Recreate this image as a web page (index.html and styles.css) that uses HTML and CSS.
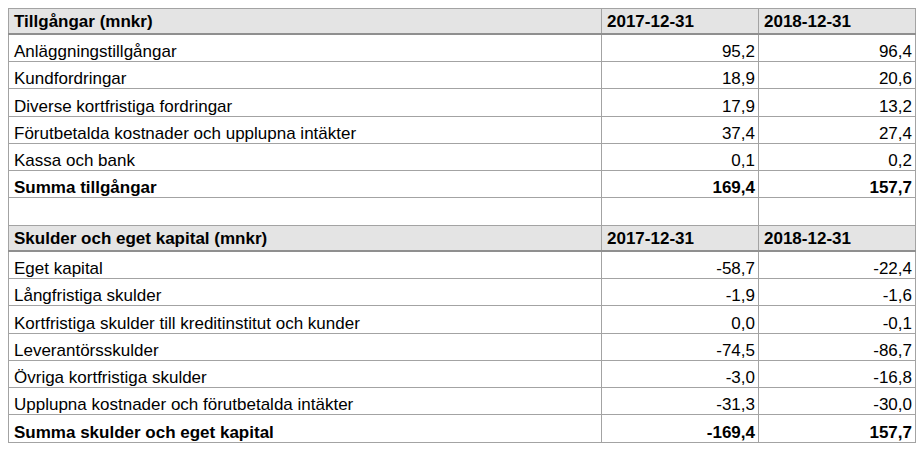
FILE: index.html
```html
<!DOCTYPE html>
<html lang="sv">
<head>
<meta charset="utf-8">
<link rel="stylesheet" href="styles.css">
</head>
<body>
<table class="bal">
  <colgroup><col class="c1"><col class="c2"><col class="c3"></colgroup>
  <tr class="head"><td>Tillgångar (mnkr)</td><td>2017-12-31</td><td>2018-12-31</td></tr>
  <tr><td>Anläggningstillgångar</td><td class="num">95,2</td><td class="num">96,4</td></tr>
  <tr><td>Kundfordringar</td><td class="num">18,9</td><td class="num">20,6</td></tr>
  <tr class="tall"><td>Diverse kortfristiga fordringar</td><td class="num">17,9</td><td class="num">13,2</td></tr>
  <tr><td>Förutbetalda kostnader och upplupna intäkter</td><td class="num">37,4</td><td class="num">27,4</td></tr>
  <tr><td>Kassa och bank</td><td class="num">0,1</td><td class="num">0,2</td></tr>
  <tr class="sum"><td>Summa tillgångar</td><td class="num">169,4</td><td class="num">157,7</td></tr>
  <tr class="blank tall"><td></td><td></td><td></td></tr>
  <tr class="head"><td>Skulder och eget kapital (mnkr)</td><td>2017-12-31</td><td>2018-12-31</td></tr>
  <tr><td>Eget kapital</td><td class="num">-58,7</td><td class="num">-22,4</td></tr>
  <tr><td>Långfristiga skulder</td><td class="num">-1,9</td><td class="num">-1,6</td></tr>
  <tr class="tall"><td>Kortfristiga skulder till kreditinstitut och kunder</td><td class="num">0,0</td><td class="num">-0,1</td></tr>
  <tr><td>Leverantörsskulder</td><td class="num">-74,5</td><td class="num">-86,7</td></tr>
  <tr><td>Övriga kortfristiga skulder</td><td class="num">-3,0</td><td class="num">-16,8</td></tr>
  <tr><td>Upplupna kostnader och förutbetalda intäkter</td><td class="num">-31,3</td><td class="num">-30,0</td></tr>
  <tr class="sum tall"><td>Summa skulder och eget kapital</td><td class="num">-169,4</td><td class="num">157,7</td></tr>
</table>
</body>
</html>
```
FILE: styles.css
```css
html, body {
  margin: 0;
  padding: 0;
  background: #ffffff;
}
body {
  padding: 8px;
  font-family: "Liberation Sans", Arial, sans-serif;
  font-size: 17px;
  color: #000;
}
.bal {
  border-collapse: collapse;
  table-layout: fixed;
  width: 907px;
  border: 1px solid #8a8a8a;
}
.c1 { width: 593px; }
.c2 { width: 157px; }
.c3 { width: 157px; }
.bal td {
  height: 26px;
  padding: 0 3px 0 5px;
  border: 1px solid #a3a3a3;
  vertical-align: bottom;
  line-height: 19px;
  white-space: nowrap;
  overflow: hidden;
}
.bal .tall td {
  height: 27px;
}
.bal td.num {
  text-align: right;
}
.bal .head td {
  background: #e4e4e4;
  font-weight: bold;
  border-bottom: 2px solid #8f8f8f;
  height: 24px;
  vertical-align: middle;
}
.sum td {
  font-weight: bold;
}
```
